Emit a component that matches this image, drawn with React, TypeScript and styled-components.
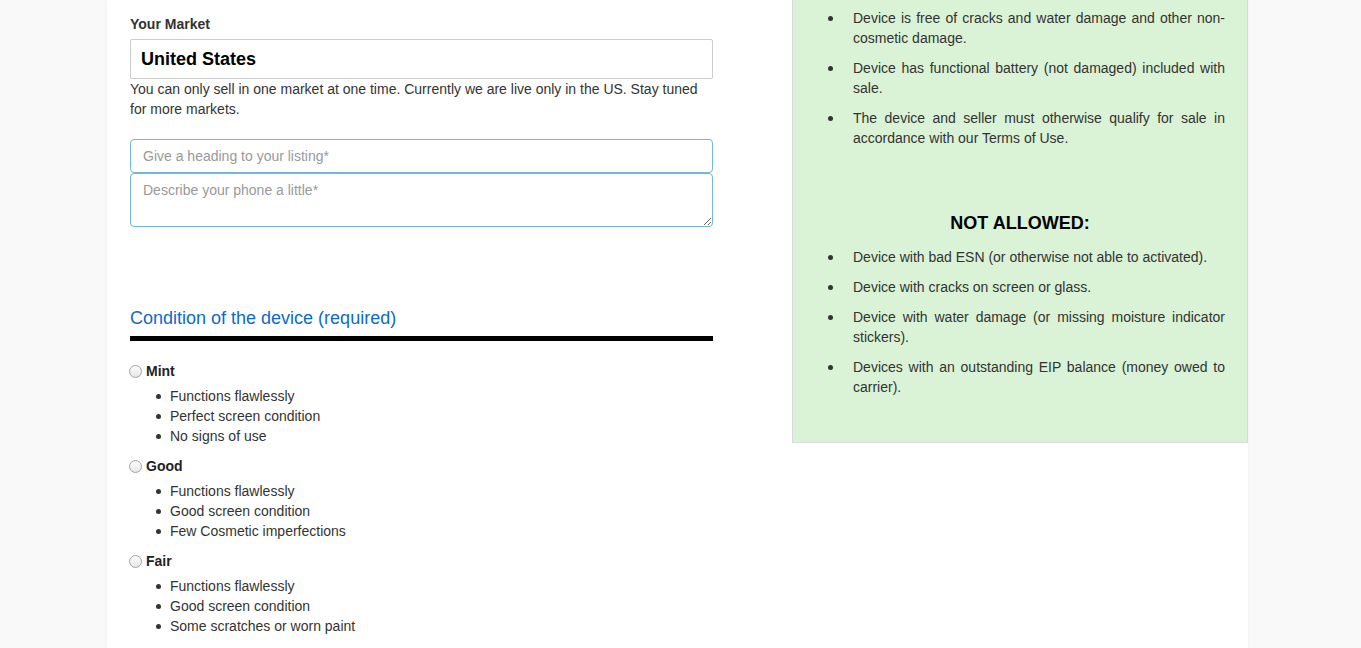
import React from "react";
import styled, { createGlobalStyle } from "styled-components";

const GlobalStyle = createGlobalStyle`
  html, body {
    margin: 0;
    padding: 0;
    background: #f9f9f9;
    font-family: "Liberation Sans", Arial, Helvetica, sans-serif;
    font-size: 14px;
    line-height: 20px;
    color: #333;
  }
  * { box-sizing: border-box; }
`;

const Page = styled.div`
  width: 1141px;
  margin-left: 107px;
  min-height: 100vh;
  background: #fff;
  box-shadow: 0 0 3px rgba(0, 0, 0, 0.06);
  padding-left: 23px;
  display: grid;
  grid-template-columns: 583px 1fr;
  column-gap: 79px;
  align-items: start;
`;

const FormColumn = styled.div`
  display: flex;
  flex-direction: column;
  padding-top: 14px;
`;

const Label = styled.label`
  font-weight: bold;
  color: #333;
  margin-bottom: 5px;
`;

const MarketBox = styled.div`
  height: 40px;
  border: 1px solid #ccc;
  border-radius: 2px;
  padding: 0 10px;
  display: flex;
  align-items: center;
  font-size: 18px;
  font-weight: bold;
  color: #000;
`;

const HelpText = styled.p`
  margin: 0 0 20px;
`;

const fieldBase = `
  width: 100%;
  border: 1px solid #71b6dc;
  border-radius: 4px;
  padding: 6px 12px;
  font-family: "Liberation Sans", Arial, Helvetica, sans-serif;
  font-size: 14px;
  line-height: 20px;
  color: #333;
  outline: none;
  background: #fff;
  &::placeholder { color: #999; }
`;

const TextInput = styled.input`
  ${fieldBase}
  height: 34px;
`;

const TextArea = styled.textarea`
  ${fieldBase}
  height: 54px;
  display: block;
  resize: vertical;
`;

const SectionTitle = styled.h3`
  margin: 81px 0 0;
  font-size: 18px;
  font-weight: normal;
  line-height: 20px;
  color: #0d6acb;
`;

const Rule = styled.div`
  height: 5px;
  background: #000;
  margin-top: 8px;
  margin-bottom: 20px;
`;

const Option = styled.div`
  margin-bottom: 10px;
`;

const OptionLabel = styled.label`
  display: flex;
  align-items: center;
  font-weight: bold;
  color: #222;
`;

const Radio = styled.input.attrs({ type: "radio" })`
  appearance: none;
  width: 13px;
  height: 13px;
  margin: 1px 4px 0 -1px;
  border-radius: 50%;
  border: 1px solid #a3a3a3;
  background: linear-gradient(#fdfdfd, #e6e6e6);
`;

const Bullets = styled.ul`
  list-style: none;
  margin: 5px 0 0;
  padding: 0 0 0 40px;
`;

const Bullet = styled.li<{ $gap?: number }>`
  position: relative;
  &::before {
    content: "";
    position: absolute;
    left: ${(p) => -(p.$gap ?? 14)}px;
    top: 8px;
    width: 5px;
    height: 5px;
    border-radius: 50%;
    background: #333;
  }
`;

const Panel = styled.aside`
  background: #daf2d6;
  border: 1px solid #d9d9d9;
  border-top: none;
  padding: 8px 22px 35px 0;
`;

const PanelList = styled.ul`
  list-style: none;
  margin: 0;
  padding: 0 0 0 60px;
`;

const PanelItem = styled(Bullet)`
  text-align: justify;
  margin-bottom: 10px;
`;

const PanelTitle = styled.h4`
  margin: 65px 0 14px 22px;
  text-align: center;
  font-size: 18px;
  line-height: 20px;
  color: #000;
`;

const conditions = [
  { name: "Mint", items: ["Functions flawlessly", "Perfect screen condition", "No signs of use"] },
  { name: "Good", items: ["Functions flawlessly", "Good screen condition", "Few Cosmetic imperfections"] },
  { name: "Fair", items: ["Functions flawlessly", "Good screen condition", "Some scratches or worn paint"] },
];

const allowed = [
  "Device is free of cracks and water damage and other non-cosmetic damage.",
  "Device has functional battery (not damaged) included with sale.",
  "The device and seller must otherwise qualify for sale in accordance with our Terms of Use.",
];

const notAllowed = [
  "Device with bad ESN (or otherwise not able to activated).",
  "Device with cracks on screen or glass.",
  "Device with water damage (or missing moisture indicator stickers).",
  "Devices with an outstanding EIP balance (money owed to carrier).",
];

export default function App() {
  return (
    <>
      <GlobalStyle />
      <Page>
        <FormColumn>
          <Label>Your Market</Label>
          <MarketBox>United States</MarketBox>
          <HelpText>
            You can only sell in one market at one time. Currently we are live only in the US. Stay tuned
            for more markets.
          </HelpText>
          <TextInput placeholder="Give a heading to your listing*" />
          <TextArea placeholder="Describe your phone a little*" />

          <SectionTitle>Condition of the device (required)</SectionTitle>
          <Rule />

          {conditions.map((c) => (
            <Option key={c.name}>
              <OptionLabel>
                <Radio name="condition" value={c.name} />
                {c.name}
              </OptionLabel>
              <Bullets>
                {c.items.map((item) => (
                  <Bullet key={item} $gap={14}>{item}</Bullet>
                ))}
              </Bullets>
            </Option>
          ))}
        </FormColumn>

        <Panel>
          <PanelList>
            {allowed.map((item) => (
              <PanelItem key={item} $gap={25}>{item}</PanelItem>
            ))}
          </PanelList>
          <PanelTitle>NOT ALLOWED:</PanelTitle>
          <PanelList>
            {notAllowed.map((item) => (
              <PanelItem key={item} $gap={25}>{item}</PanelItem>
            ))}
          </PanelList>
        </Panel>
      </Page>
    </>
  );
}
